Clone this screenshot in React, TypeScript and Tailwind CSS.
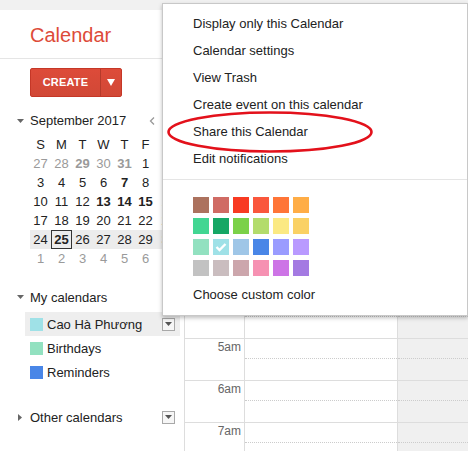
import React from "react";

const weeks: { d: string; muted?: boolean; bold?: boolean; today?: boolean }[][] = [
  [
    { d: "27", muted: true },
    { d: "28", muted: true },
    { d: "29", muted: true, bold: true },
    { d: "30", muted: true },
    { d: "31", muted: true, bold: true },
    { d: "1" },
    { d: "2" },
  ],
  [{ d: "3" }, { d: "4" }, { d: "5" }, { d: "6" }, { d: "7", bold: true }, { d: "8" }, { d: "9" }],
  [
    { d: "10" },
    { d: "11" },
    { d: "12" },
    { d: "13", bold: true },
    { d: "14", bold: true },
    { d: "15", bold: true },
    { d: "16" },
  ],
  [{ d: "17" }, { d: "18" }, { d: "19" }, { d: "20" }, { d: "21" }, { d: "22" }, { d: "23" }],
  [
    { d: "24" },
    { d: "25", bold: true, today: true },
    { d: "26" },
    { d: "27" },
    { d: "28" },
    { d: "29" },
    { d: "30" },
  ],
  [
    { d: "1", muted: true },
    { d: "2", muted: true },
    { d: "3", muted: true },
    { d: "4", muted: true },
    { d: "5", muted: true },
    { d: "6", muted: true },
    { d: "7", muted: true },
  ],
];

const swatches = [
  ["#ac725e", "#d06b64", "#f83a22", "#fa573c", "#ff7537", "#ffad46"],
  ["#42d692", "#16a765", "#7bd148", "#b3dc6c", "#fbe983", "#fad165"],
  ["#92e1c0", "#9fe1e7", "#9fc6e7", "#4986e7", "#9a9cff", "#b99aff"],
  ["#c2c2c2", "#cabdbf", "#cca6ac", "#f691b2", "#cd74e6", "#a47ae2"],
];

const menuItems = [
  "Display only this Calendar",
  "Calendar settings",
  "View Trash",
  "Create event on this calendar",
  "Share this Calendar",
  "Edit notifications",
];

const hours = ["12am", "1am", "2am", "3am", "4am", "5am", "6am", "7am"];

function DropBox() {
  return (
    <div className="w-[13px] h-[13px] border border-[#a8a8a8] bg-[#f6f6f6] flex items-center justify-center">
      <svg width="7" height="4" viewBox="0 0 7 4">
        <path d="M0 0 L7 0 L3.5 4 Z" fill="#555" />
      </svg>
    </div>
  );
}

function CalRow({ color, name, active }: { color: string; name: string; active?: boolean }) {
  return (
    <div
      className={`ml-[25px] w-[155px] h-[24px] flex items-center pl-[5px] ${active ? "bg-[#eeeeee]" : ""}`}
    >
      <div className="w-[13px] h-[13px]" style={{ backgroundColor: color }} />
      <span className="ml-[4px] text-[13px] text-[#222] leading-none">{name}</span>
      {active && (
        <div className="ml-auto mr-[5px]">
          <DropBox />
        </div>
      )}
    </div>
  );
}

export default function App() {
  return (
    <div className="relative w-[468px] h-[451px] overflow-hidden bg-white font-['Liberation_Sans',Arial,sans-serif] text-[#222]">
      <div className="h-[10px] bg-[#f1f1f1]" />
      <div className="h-[49px] border-b border-[#e5e5e5] flex items-center pl-[30px] pt-[2px]">
        <span className="text-[20px] leading-none text-[#dd4b39]">Calendar</span>
      </div>
      <div className="flex">
        <aside className="w-[184px] shrink-0">
          <div className="pt-[9px] pl-[30px]">
            <div className="flex w-[92px] h-[29px] rounded-[2px] border border-[#c53727] bg-gradient-to-b from-[#dd4b39] to-[#d14836]">
              <div className="w-[70px] flex items-center justify-center text-[11px] font-bold text-white tracking-[0.2px] border-r border-[#b53a2a]">
                CREATE
              </div>
              <div className="flex-1 flex items-center justify-center">
                <svg width="8" height="7" viewBox="0 0 8 7">
                  <path d="M0 0 L8 0 L4 7 Z" fill="#fff" />
                </svg>
              </div>
            </div>
          </div>

          <div className="mt-[14px] h-[19px] flex items-center pl-[17px]">
            <svg width="7" height="4" viewBox="0 0 7 4">
              <path d="M0 0 L7 0 L3.5 4 Z" fill="#666" />
            </svg>
            <span className="ml-[6px] text-[13px] leading-none">September 2017</span>
            <svg className="ml-[23px]" width="6" height="8" viewBox="0 0 6 8">
              <path d="M5 0.5 L1.5 4 L5 7.5" stroke="#999" strokeWidth="1.3" fill="none" />
            </svg>
          </div>

          <div className="mt-[5px] ml-[30px] w-[147px] text-[13px]">
            <div className="grid grid-cols-7 h-[19px] items-center text-center">
              {["S", "M", "T", "W", "T", "F", "S"].map((d, i) => (
                <span key={i} className={i === 6 ? "text-right pr-[3px]" : ""}>
                  {d}
                </span>
              ))}
            </div>
            {weeks.map((w, wi) => (
              <div
                key={wi}
                className={`grid grid-cols-7 h-[19px] text-center ${wi === 4 ? "bg-[#ececec]" : ""}`}
              >
                {w.map((c, ci) => (
                  <div
                    key={ci}
                    className={`flex items-center leading-none ${
                      ci === 6 ? "justify-end pr-[1px]" : "justify-center"
                    } ${c.muted ? "text-[#9a9a9a]" : "text-[#222]"} ${c.bold ? "font-bold" : ""} ${
                      c.today ? "border border-[#333]" : ""
                    }`}
                  >
                    {c.d}
                  </div>
                ))}
              </div>
            ))}
          </div>

          <div className="mt-[19px] h-[20px] flex items-center pl-[17px]">
            <svg width="7" height="4" viewBox="0 0 7 4">
              <path d="M0 0 L7 0 L3.5 4 Z" fill="#666" />
            </svg>
            <span className="ml-[6px] text-[13px] leading-none">My calendars</span>
          </div>

          <div className="mt-[5px]">
            <CalRow color="#9fe1e7" name="Cao Hà Phương" active />
            <CalRow color="#92e1c0" name="Birthdays" />
            <CalRow color="#4986e7" name="Reminders" />
          </div>

          <div className="mt-[23px] h-[20px] flex items-center pl-[18px] pr-[9px]">
            <svg width="4" height="7" viewBox="0 0 4 7">
              <path d="M0 0 L4 3.5 L0 7 Z" fill="#666" />
            </svg>
            <span className="ml-[8px] text-[13px] leading-none">Other calendars</span>
            <div className="ml-auto">
              <DropBox />
            </div>
          </div>
        </aside>

        <main className="flex-1 border-l border-[#dddddd]">
          <div className="h-[69px]" />
          {hours.map((h) => (
            <div key={h} className="flex h-[42px] border-t border-[#dddddd]">
              <div className="w-[60px] shrink-0 border-r border-[#dddddd] text-right pr-[3px] pt-[1px] text-[12px] leading-[14px] text-[#666]">
                {h}
              </div>
              <div className="w-[153px] shrink-0 border-r border-[#dddddd]">
                <div className="h-[20px] border-b border-dotted border-[#cccccc]" />
              </div>
              <div className="flex-1 bg-[#f0f0f0]">
                <div className="h-[20px] border-b border-dotted border-[#cccccc]" />
              </div>
            </div>
          ))}
        </main>
      </div>

      {/* Dropdown menu */}
      <div className="absolute left-[162px] top-[3px] w-[306px] h-[313px] bg-white border border-[#c8c8c8] shadow-[0_2px_4px_rgba(0,0,0,0.25)]">
        <div className="pt-[6px] pb-[7px] border-b border-[#e5e5e5]">
          {menuItems.map((m) => (
            <div key={m} className="h-[27px] flex items-center pl-[30px] text-[13px] text-[#222]">
              {m}
            </div>
          ))}
        </div>
        <div className="pt-[17px] pl-[30px] flex flex-col gap-[5px]">
          {swatches.map((row, ri) => (
            <div key={ri} className="flex gap-[4px]">
              {row.map((c, ci) => (
                <div
                  key={ci}
                  className="w-[16px] h-[16px] flex items-center justify-center"
                  style={{ backgroundColor: c }}
                >
                  {ri === 2 && ci === 1 && (
                    <svg width="12" height="10" viewBox="0 0 12 10">
                      <path d="M1.5 5 L4.5 8 L10.5 2" stroke="#fff" strokeWidth="2.4" fill="none" />
                    </svg>
                  )}
                </div>
              ))}
            </div>
          ))}
        </div>
        <div className="mt-[11px] pl-[30px] h-[15px] flex items-center text-[13px] text-[#222]">
          Choose custom color
        </div>
      </div>

      {/* Red highlight ellipse */}
      <svg className="absolute left-[160px] top-[105px]" width="220" height="56" viewBox="0 0 220 56">
        <ellipse cx="110" cy="27" rx="101.5" ry="19.5" stroke="#e3111b" strokeWidth="2.6" fill="none" />
      </svg>
    </div>
  );
}
